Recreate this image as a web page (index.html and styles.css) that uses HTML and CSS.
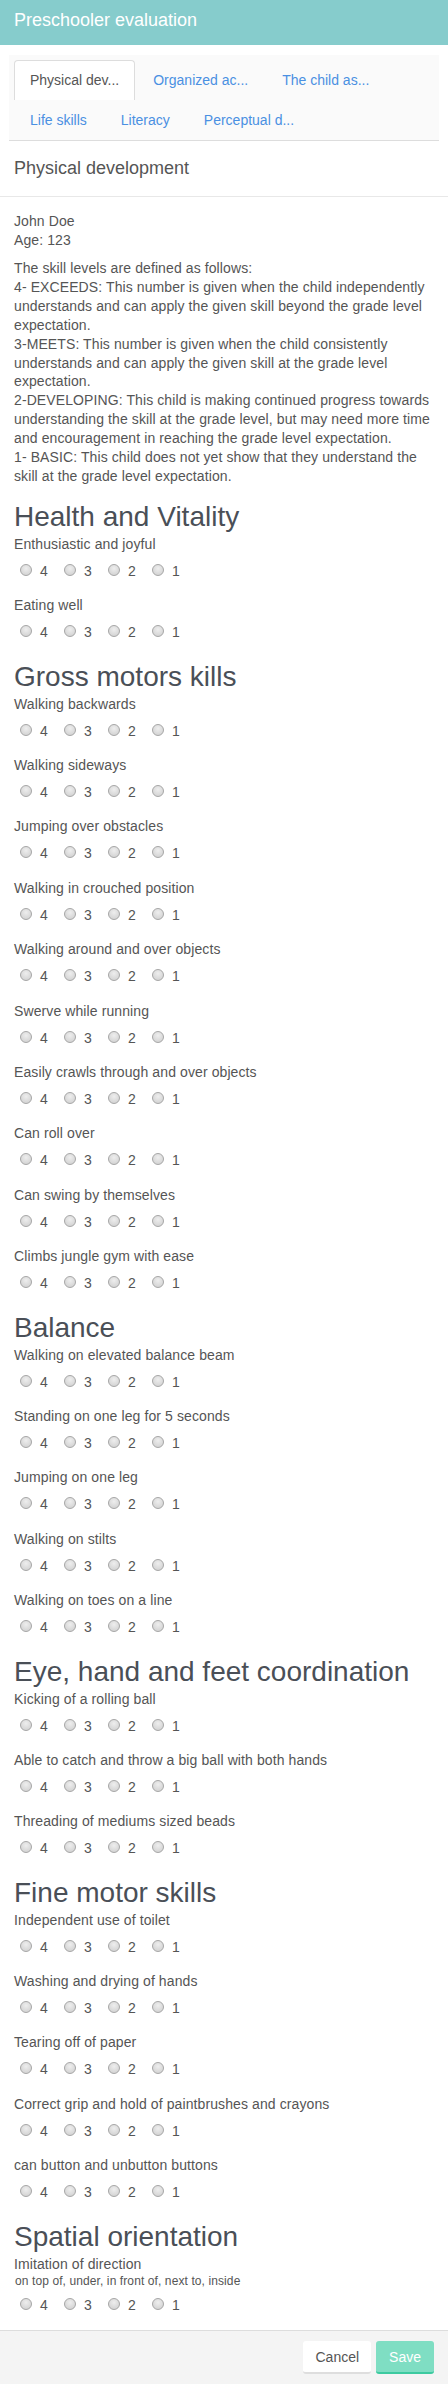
FILE: index.html
```html
<!DOCTYPE html>
<html lang="en">
<head>
<meta charset="utf-8">
<title>Preschooler evaluation</title>
<link rel="stylesheet" href="styles.css">
</head>
<body>
<header class="topbar"><h1 class="title">Preschooler evaluation</h1></header>

<nav class="tabs-wrap">
  <ul class="tabs">
    <li class="tab active"><a href="#">Physical dev...</a></li>
    <li class="tab"><a href="#">Organized ac...</a></li>
    <li class="tab"><a href="#">The child as...</a></li>
    <li class="tab"><a href="#">Life skills</a></li>
    <li class="tab"><a href="#">Literacy</a></li>
    <li class="tab"><a href="#">Perceptual d...</a></li>
  </ul>
</nav>

<div class="panel-title">Physical development</div>

<main class="content">
  <div class="student">
    <div>John Doe</div>
    <div>Age: 123</div>
  </div>
  <p class="legend">The skill levels are defined as follows:<br>4- EXCEEDS: This number is given when the child independently understands and can apply the given skill beyond the grade level expectation.<br>3-MEETS: This number is given when the child consistently understands and can apply the given skill at the grade level expectation.<br>2-DEVELOPING: This child is making continued progress towards understanding the skill at the grade level, but may need more time and encouragement in reaching the grade level expectation.<br>1- BASIC: This child does not yet show that they understand the skill at the grade level expectation.</p>

  <section class="group">
    <h2>Health and Vitality</h2>
    <div class="item"><div class="q">Enthusiastic and joyful</div>
      <div class="opts"><label class="opt"><input type="radio" name="q1"><span>4</span></label><label class="opt"><input type="radio" name="q1"><span>3</span></label><label class="opt"><input type="radio" name="q1"><span>2</span></label><label class="opt"><input type="radio" name="q1"><span>1</span></label></div></div>
    <div class="item"><div class="q">Eating well</div>
      <div class="opts"><label class="opt"><input type="radio" name="q2"><span>4</span></label><label class="opt"><input type="radio" name="q2"><span>3</span></label><label class="opt"><input type="radio" name="q2"><span>2</span></label><label class="opt"><input type="radio" name="q2"><span>1</span></label></div></div>
  </section>

  <section class="group">
    <h2>Gross motors kills</h2>
    <div class="item"><div class="q">Walking backwards</div>
      <div class="opts"><label class="opt"><input type="radio" name="q3"><span>4</span></label><label class="opt"><input type="radio" name="q3"><span>3</span></label><label class="opt"><input type="radio" name="q3"><span>2</span></label><label class="opt"><input type="radio" name="q3"><span>1</span></label></div></div>
    <div class="item"><div class="q">Walking sideways</div>
      <div class="opts"><label class="opt"><input type="radio" name="q4"><span>4</span></label><label class="opt"><input type="radio" name="q4"><span>3</span></label><label class="opt"><input type="radio" name="q4"><span>2</span></label><label class="opt"><input type="radio" name="q4"><span>1</span></label></div></div>
    <div class="item"><div class="q">Jumping over obstacles</div>
      <div class="opts"><label class="opt"><input type="radio" name="q5"><span>4</span></label><label class="opt"><input type="radio" name="q5"><span>3</span></label><label class="opt"><input type="radio" name="q5"><span>2</span></label><label class="opt"><input type="radio" name="q5"><span>1</span></label></div></div>
    <div class="item"><div class="q">Walking in crouched position</div>
      <div class="opts"><label class="opt"><input type="radio" name="q6"><span>4</span></label><label class="opt"><input type="radio" name="q6"><span>3</span></label><label class="opt"><input type="radio" name="q6"><span>2</span></label><label class="opt"><input type="radio" name="q6"><span>1</span></label></div></div>
    <div class="item"><div class="q">Walking around and over objects</div>
      <div class="opts"><label class="opt"><input type="radio" name="q7"><span>4</span></label><label class="opt"><input type="radio" name="q7"><span>3</span></label><label class="opt"><input type="radio" name="q7"><span>2</span></label><label class="opt"><input type="radio" name="q7"><span>1</span></label></div></div>
    <div class="item"><div class="q">Swerve while running</div>
      <div class="opts"><label class="opt"><input type="radio" name="q8"><span>4</span></label><label class="opt"><input type="radio" name="q8"><span>3</span></label><label class="opt"><input type="radio" name="q8"><span>2</span></label><label class="opt"><input type="radio" name="q8"><span>1</span></label></div></div>
    <div class="item"><div class="q">Easily crawls through and over objects</div>
      <div class="opts"><label class="opt"><input type="radio" name="q9"><span>4</span></label><label class="opt"><input type="radio" name="q9"><span>3</span></label><label class="opt"><input type="radio" name="q9"><span>2</span></label><label class="opt"><input type="radio" name="q9"><span>1</span></label></div></div>
    <div class="item"><div class="q">Can roll over</div>
      <div class="opts"><label class="opt"><input type="radio" name="q10"><span>4</span></label><label class="opt"><input type="radio" name="q10"><span>3</span></label><label class="opt"><input type="radio" name="q10"><span>2</span></label><label class="opt"><input type="radio" name="q10"><span>1</span></label></div></div>
    <div class="item"><div class="q">Can swing by themselves</div>
      <div class="opts"><label class="opt"><input type="radio" name="q11"><span>4</span></label><label class="opt"><input type="radio" name="q11"><span>3</span></label><label class="opt"><input type="radio" name="q11"><span>2</span></label><label class="opt"><input type="radio" name="q11"><span>1</span></label></div></div>
    <div class="item"><div class="q">Climbs jungle gym with ease</div>
      <div class="opts"><label class="opt"><input type="radio" name="q12"><span>4</span></label><label class="opt"><input type="radio" name="q12"><span>3</span></label><label class="opt"><input type="radio" name="q12"><span>2</span></label><label class="opt"><input type="radio" name="q12"><span>1</span></label></div></div>
  </section>

  <section class="group">
    <h2>Balance</h2>
    <div class="item"><div class="q">Walking on elevated balance beam</div>
      <div class="opts"><label class="opt"><input type="radio" name="q13"><span>4</span></label><label class="opt"><input type="radio" name="q13"><span>3</span></label><label class="opt"><input type="radio" name="q13"><span>2</span></label><label class="opt"><input type="radio" name="q13"><span>1</span></label></div></div>
    <div class="item"><div class="q">Standing on one leg for 5 seconds</div>
      <div class="opts"><label class="opt"><input type="radio" name="q14"><span>4</span></label><label class="opt"><input type="radio" name="q14"><span>3</span></label><label class="opt"><input type="radio" name="q14"><span>2</span></label><label class="opt"><input type="radio" name="q14"><span>1</span></label></div></div>
    <div class="item"><div class="q">Jumping on one leg</div>
      <div class="opts"><label class="opt"><input type="radio" name="q15"><span>4</span></label><label class="opt"><input type="radio" name="q15"><span>3</span></label><label class="opt"><input type="radio" name="q15"><span>2</span></label><label class="opt"><input type="radio" name="q15"><span>1</span></label></div></div>
    <div class="item"><div class="q">Walking on stilts</div>
      <div class="opts"><label class="opt"><input type="radio" name="q16"><span>4</span></label><label class="opt"><input type="radio" name="q16"><span>3</span></label><label class="opt"><input type="radio" name="q16"><span>2</span></label><label class="opt"><input type="radio" name="q16"><span>1</span></label></div></div>
    <div class="item"><div class="q">Walking on toes on a line</div>
      <div class="opts"><label class="opt"><input type="radio" name="q17"><span>4</span></label><label class="opt"><input type="radio" name="q17"><span>3</span></label><label class="opt"><input type="radio" name="q17"><span>2</span></label><label class="opt"><input type="radio" name="q17"><span>1</span></label></div></div>
  </section>

  <section class="group">
    <h2>Eye, hand and feet coordination</h2>
    <div class="item"><div class="q">Kicking of a rolling ball</div>
      <div class="opts"><label class="opt"><input type="radio" name="q18"><span>4</span></label><label class="opt"><input type="radio" name="q18"><span>3</span></label><label class="opt"><input type="radio" name="q18"><span>2</span></label><label class="opt"><input type="radio" name="q18"><span>1</span></label></div></div>
    <div class="item"><div class="q">Able to catch and throw a big ball with both hands</div>
      <div class="opts"><label class="opt"><input type="radio" name="q19"><span>4</span></label><label class="opt"><input type="radio" name="q19"><span>3</span></label><label class="opt"><input type="radio" name="q19"><span>2</span></label><label class="opt"><input type="radio" name="q19"><span>1</span></label></div></div>
    <div class="item"><div class="q">Threading of mediums sized beads</div>
      <div class="opts"><label class="opt"><input type="radio" name="q20"><span>4</span></label><label class="opt"><input type="radio" name="q20"><span>3</span></label><label class="opt"><input type="radio" name="q20"><span>2</span></label><label class="opt"><input type="radio" name="q20"><span>1</span></label></div></div>
  </section>

  <section class="group">
    <h2>Fine motor skills</h2>
    <div class="item"><div class="q">Independent use of toilet</div>
      <div class="opts"><label class="opt"><input type="radio" name="q21"><span>4</span></label><label class="opt"><input type="radio" name="q21"><span>3</span></label><label class="opt"><input type="radio" name="q21"><span>2</span></label><label class="opt"><input type="radio" name="q21"><span>1</span></label></div></div>
    <div class="item"><div class="q">Washing and drying of hands</div>
      <div class="opts"><label class="opt"><input type="radio" name="q22"><span>4</span></label><label class="opt"><input type="radio" name="q22"><span>3</span></label><label class="opt"><input type="radio" name="q22"><span>2</span></label><label class="opt"><input type="radio" name="q22"><span>1</span></label></div></div>
    <div class="item"><div class="q">Tearing off of paper</div>
      <div class="opts"><label class="opt"><input type="radio" name="q23"><span>4</span></label><label class="opt"><input type="radio" name="q23"><span>3</span></label><label class="opt"><input type="radio" name="q23"><span>2</span></label><label class="opt"><input type="radio" name="q23"><span>1</span></label></div></div>
    <div class="item"><div class="q">Correct grip and hold of paintbrushes and crayons</div>
      <div class="opts"><label class="opt"><input type="radio" name="q24"><span>4</span></label><label class="opt"><input type="radio" name="q24"><span>3</span></label><label class="opt"><input type="radio" name="q24"><span>2</span></label><label class="opt"><input type="radio" name="q24"><span>1</span></label></div></div>
    <div class="item"><div class="q">can button and unbutton buttons</div>
      <div class="opts"><label class="opt"><input type="radio" name="q25"><span>4</span></label><label class="opt"><input type="radio" name="q25"><span>3</span></label><label class="opt"><input type="radio" name="q25"><span>2</span></label><label class="opt"><input type="radio" name="q25"><span>1</span></label></div></div>
  </section>

  <section class="group">
    <h2>Spatial orientation</h2>
    <div class="item"><div class="q">Imitation of direction</div>
      <div class="sub">on top of, under, in front of, next to, inside</div>
      <div class="opts"><label class="opt"><input type="radio" name="q26"><span>4</span></label><label class="opt"><input type="radio" name="q26"><span>3</span></label><label class="opt"><input type="radio" name="q26"><span>2</span></label><label class="opt"><input type="radio" name="q26"><span>1</span></label></div></div>
  </section>
</main>

<footer class="footer">
  <button class="btn cancel" type="button">Cancel</button>
  <button class="btn save" type="button">Save</button>
</footer>
</body>
</html>
```

FILE: styles.css
```css
* {
  box-sizing: border-box;
}

body {
  margin: 0;
  font-family: "Liberation Sans", Arial, sans-serif;
  font-size: 14px;
  letter-spacing: 0.1px;
  color: #555;
  background: #fff;
}

.topbar {
  height: 45px;
  background: #86cccc;
  padding: 10px 14px 0;
}

.title {
  margin: 0;
  font-size: 18px;
  line-height: 20px;
  font-weight: normal;
  letter-spacing: 0;
  color: #fff;
}

.tabs-wrap {
  margin: 10px 9px 0;
  padding: 5px 0 0 5px;
  background: #fafafa;
  border-bottom: 1px solid #ddd;
}

.tabs {
  list-style: none;
  margin: 0;
  padding: 0;
  display: flex;
  flex-wrap: wrap;
}

.tab {
  margin-right: 2px;
}

.tab a {
  display: block;
  padding: 9px 15px 10px;
  line-height: 20px;
  letter-spacing: 0;
  border: 1px solid transparent;
  border-bottom: 0;
  border-radius: 4px 4px 0 0;
  color: #4a90e2;
  text-decoration: none;
}

.tab.active a {
  background: #fff;
  border-color: #ddd;
  color: #555;
}

.panel-title {
  padding: 17px 14px 18px;
  font-size: 18px;
  line-height: 20px;
  letter-spacing: 0;
  color: #555;
  border-bottom: 1px solid #e8e8e8;
}

.content {
  display: flex;
  flex-direction: column;
  padding: 15px 14px 0 14px;
}

.student div {
  line-height: 18.5px;
}

.legend {
  margin: 10px 0 12px;
  line-height: 18.9px;
}

.group h2 {
  margin: 3px 0 3px;
  font-size: 28px;
  line-height: 31px;
  font-weight: normal;
  letter-spacing: 0;
  color: #4a4f57;
}

.item {
  margin-bottom: 15.4px;
}

.q {
  line-height: 19px;
}

.sub {
  font-size: 12px;
  line-height: 14px;
  padding-left: 1px;
}

.opts {
  display: flex;
  height: 20px;
  margin-top: 7px;
}

.opt {
  display: flex;
  align-items: flex-start;
  width: 44px;
  line-height: 20px;
}

.opt input {
  -webkit-appearance: none;
  appearance: none;
  width: 12px;
  height: 12px;
  margin: 3px 8px 0 6px;
  border: 1px solid #a6a6a6;
  border-radius: 50%;
  background: radial-gradient(circle at 50% 35%, #eeeeee 0%, #dadada 60%, #cfcfcf 100%);
}

.footer {
  display: flex;
  justify-content: flex-end;
  gap: 5px;
  padding: 10px 14px;
  background: #f4f4f4;
  border-top: 1px solid #ddd;
}

.btn {
  height: 33px;
  padding: 0 12px;
  border: 0;
  border-radius: 3px;
  font-family: "Liberation Sans", Arial, sans-serif;
  font-size: 14px;
  line-height: 20px;
}

.cancel {
  background: #fff;
  color: #555;
  border-bottom: 2px solid #dedede;
}

.save {
  padding: 0 13px;
  background: #7fdec3;
  color: #fff;
  border-bottom: 2px solid #3dcaa0;
}
```
